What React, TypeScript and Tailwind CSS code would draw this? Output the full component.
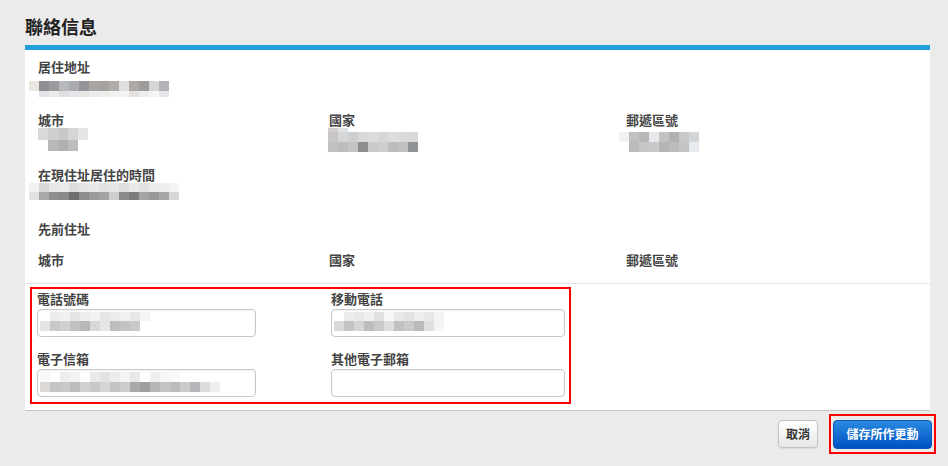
import React from "react";

type Row = { h: number; c: string[] };

// pixelated (blurred) personal data, drawn as small blocks
function Mosaic({ rows, cell = 10, offset = 0 }: { rows: Row[]; cell?: number; offset?: number }) {
    return (
        <div className="flex flex-col" style={{ marginLeft: offset }}>
            {rows.map((r, i) => (
                <div key={i} className="flex">
                    {r.c.map((c, j) => (
                        <div key={j} style={{ width: cell, height: r.h, background: c }} />
                    ))}
                </div>
            ))}
        </div>
    );
}

const addr: Row[] = [
    { h: 10, c: ["#ece6e0", "#8d8f94", "#9b9b9f", "#b6b9bd", "#a9abaf", "#939599", "#aaa6a4", "#a6a2a0", "#b1ada9", "#dfdfe1", "#aca8a4", "#9f9b99", "#d6d6d8", "#b2b4b8"] },
    { h: 6, c: ["#ffffff", "#e3e3e5", "#ebe9e9", "#dfdddd", "#e5e5e7", "#e7e5e3", "#ececec", "#efedeb", "#f1f1f1", "#f3f3f3", "#e3e1df", "#ededed", "#f5f5f5", "#e7e7e9"] },
];
const city: Row[] = [
    { h: 12, c: ["#d9d9db", "#cfcfd1", "#c8c8ca", "#d6d6d8", "#e6e6e8"] },
    { h: 11, c: ["#ffffff", "#b9b9bb", "#b0b0b2", "#bdbdbf", "#ffffff"] },
];
const country: Row[] = [
    { h: 4, c: ["#cfcccb", "#dfe2e4", "#ffffff", "#ffffff", "#ffffff", "#ffffff", "#ffffff", "#ffffff", "#ffffff"] },
    { h: 10, c: ["#c8c6c5", "#d4d6d8", "#cdd0d2", "#d8d8d8", "#dbdbdb", "#d6d6d6", "#dddddd", "#dadada", "#d9d9d9"] },
    { h: 10, c: ["#c2c0bf", "#bdbdbd", "#c4c4c4", "#8e8e8e", "#c9cacc", "#cdcdcd", "#bcbcbc", "#c1c1c1", "#8f9297"] },
];
const zip: Row[] = [
    { h: 4, c: ["#ffffff", "#ffffff", "#ffffff", "#ffffff", "#ffffff", "#ffffff", "#ffffff", "#ffffff"] },
    { h: 10, c: ["#f1f1ef", "#c1c1c3", "#b8b8b8", "#e8eaee", "#c3c3c3", "#b1b1b1", "#c8c8c8", "#d3d6d8"] },
    { h: 10, c: ["#ffffff", "#bcbbbb", "#c6c6c6", "#c9c9c9", "#b5b5b5", "#bcbcbc", "#c4c4c4", "#e8ecf0"] },
];
const since: Row[] = [
    { h: 9, c: ["#f2f2f4", "#d8d8da", "#e6e6e8", "#eaeaea", "#dddddd", "#e4e4e4", "#e8e8e8", "#e2e2e2", "#e6e6e6", "#dedede", "#e9e9e9", "#e2e2e2", "#ebebeb", "#eeeeee", "#f4f4f4"] },
    { h: 8, c: ["#e4e2e0", "#a9a9ab", "#8f8f91", "#8a8a8c", "#6f6f71", "#8d8d8f", "#9b9b9b", "#a3a3a5", "#cfcfcf", "#8b8b8d", "#7d7d7f", "#a5a5a7", "#999999", "#a7a7a9", "#d6d6d8"] },
];
const phone: Row[] = [
    { h: 9, c: ["#ffffff", "#ececee", "#f0f0f0", "#e4e4e6", "#eeeeee", "#f2f2f2", "#e6e6e8", "#ebebeb", "#f0f0f0", "#e7e7e9", "#f4f4f4"] },
    { h: 10, c: ["#e6e4e4", "#c8c8ca", "#d0d0d0", "#c0c0c2", "#b8b8ba", "#d8d8d8", "#e6e6e6", "#bdbdbf", "#c4c2c2", "#c9c9cb", "#ffffff"] },
];
const mobile: Row[] = [
    { h: 9, c: ["#ffffff", "#ececec", "#e8e8ea", "#f0f0f0", "#e0e0e2", "#f6f6f6", "#e9e9e9", "#e3e3e5", "#eeeeee", "#e7e7e7", "#f3f3f3"] },
    { h: 10, c: ["#dadadc", "#c3c3c5", "#d5d5d5", "#bdbdbf", "#c9c9c9", "#dedede", "#c1c1c3", "#cacaca", "#bbbbbd", "#dfdfdf", "#f4f4f4"] },
];
const email: Row[] = [
    { h: 10, c: ["#f8f8f8", "#ffffff", "#ededed", "#f2f2f2", "#ffffff", "#eaeaea", "#e2e2e4", "#ececec", "#f4f4f4", "#e8e8e8", "#ffffff", "#efefef", "#f6f6f6", "#fafafa", "#ffffff", "#ffffff", "#ffffff", "#ffffff"] },
    { h: 10, c: ["#dcd8d6", "#c4c4c6", "#c9c7c7", "#bcbcbe", "#d2d0ce", "#c8c8c8", "#d6d6d8", "#c3c3c5", "#cfcdcb", "#a9a9ab", "#9f9fa1", "#b8b6b4", "#c4c4c4", "#bcbcbc", "#cbcbcb", "#b4b6ba", "#dcdcdc", "#eeeeee"] },
];

function Label({ children }: { children: React.ReactNode }) {
    return <div className="text-[13px] leading-[16px] font-bold text-[#444]">{children}</div>;
}

function Field({ label, width, value }: { label: string; width: string; value?: Row[] }) {
    return (
        <div className="flex flex-col">
            <Label>{label}</Label>
            <div className={`${width} mt-[2px] h-[28px] rounded-[4px] border border-[#c8c8c8] bg-white shadow-[inset_0_1px_2px_rgba(0,0,0,0.06)] pl-[2px] pt-[2px]`}>
                {value && <Mosaic rows={value} />}
            </div>
        </div>
    );
}

export default function App() {
    return (
        <div className="w-[948px] h-[466px] overflow-hidden bg-[#ebebeb] font-['Noto_Sans_CJK_TC','Liberation_Sans',sans-serif]">
            {/* Title */}
            <div className="h-[45px] pl-[25px] pt-[14px]">
                <h2 className="text-[18px] leading-[24px] font-bold text-[#222]">聯絡信息</h2>
            </div>

            {/* Panel */}
            <div className="ml-[25px] w-[905px] bg-white border-t-[5px] border-t-[#22a0dc] border-b border-b-[#c6c6c6]">
                <div className="pl-[13px] pt-[9px] pb-[15px]">
                    <Label>居住地址</Label>
                    <div className="mt-[6px]">
                        <Mosaic rows={addr} offset={-9} />
                    </div>

                    <div className="mt-[15px] grid grid-cols-[291px_297px_1fr]">
                        <div>
                            <Label>城市</Label>
                            <Mosaic rows={city} offset={0} />
                        </div>
                        <div>
                            <Label>國家</Label>
                            <Mosaic rows={country} offset={-1} />
                        </div>
                        <div>
                            <Label>郵遞區號</Label>
                            <Mosaic rows={zip} offset={-7} />
                        </div>
                    </div>

                    <div className="mt-[15px]">
                        <Label>在現住址居住的時間</Label>
                        <Mosaic rows={since} offset={-9} />
                    </div>

                    <div className="mt-[21px]">
                        <Label>先前住址</Label>
                    </div>

                    <div className="mt-[15px] grid grid-cols-[291px_297px_1fr]">
                        <Label>城市</Label>
                        <Label>國家</Label>
                        <Label>郵遞區號</Label>
                    </div>
                </div>

                <div className="h-px bg-[#e4e4e4]" />

                <div className="pt-[3px] pb-[6px] pl-[5px]">
                    <div className="w-[541px] border-2 border-[#ff0000] pl-[5px] pt-[2px] pb-[5px] grid grid-cols-[294px_1fr]">
                        <div className="flex flex-col">
                            <Field label="電話號碼" width="w-[219px]" value={phone} />
                            <div className="mt-[14px]">
                                <Field label="電子信箱" width="w-[219px]" value={email} />
                            </div>
                        </div>
                        <div className="flex flex-col">
                            <Field label="移動電話" width="w-[234px]" value={mobile} />
                            <div className="mt-[14px]">
                                <Field label="其他電子郵箱" width="w-[234px]" />
                            </div>
                        </div>
                    </div>
                </div>
            </div>

            {/* Footer buttons */}
            <div className="mt-[3px] pr-[12px] flex justify-end items-center">
                <button className="mr-[11px] w-[40px] h-[28px] rounded-[4px] border border-[#c4c4c4] bg-gradient-to-b from-white to-[#e8e8e8] text-[12px] font-bold text-[#333] shadow-[0_1px_1px_rgba(0,0,0,0.08)]">
                    取消
                </button>
                <div className="w-[107px] h-[40px] border-2 border-[#ff0000] flex items-center justify-center">
                    <button className="w-[99px] h-[29px] rounded-[4px] bg-gradient-to-b from-[#2a8ae0] to-[#0052c2] text-[12px] font-bold text-white border border-[#0a56b8]">
                        儲存所作更動
                    </button>
                </div>
            </div>
        </div>
    );
}
